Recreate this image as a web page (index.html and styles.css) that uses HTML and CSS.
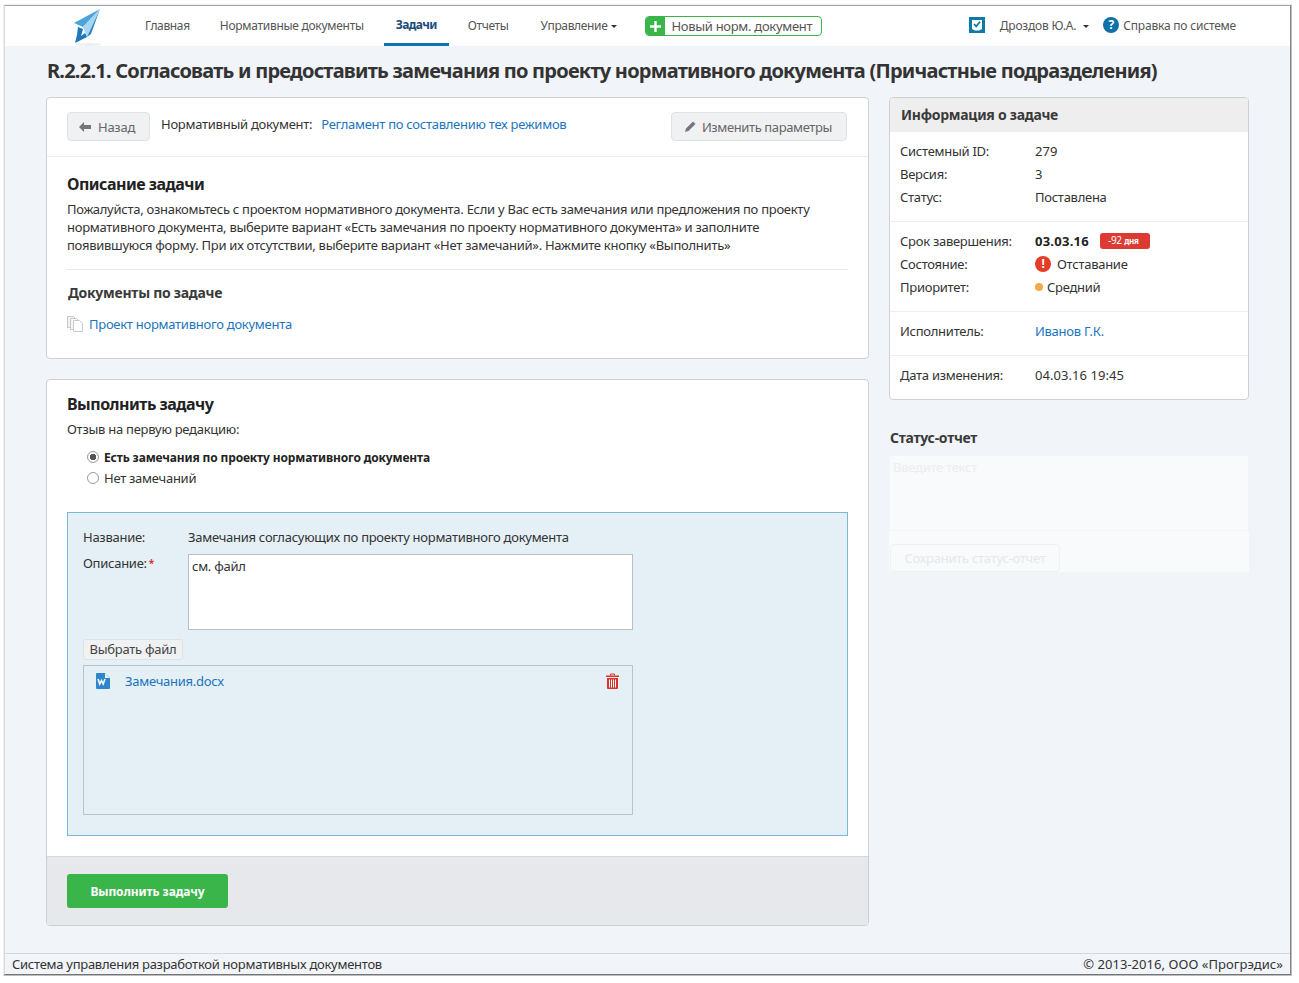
FILE: index.html
```html
<!DOCTYPE html>
<html lang="ru">
<head>
    <meta charset="UTF-8">
    <title>R.2.2.1. Согласовать и предоставить замечания</title>
    <link rel="stylesheet" href="styles.css">
</head>
<body>
<div class="shade-outer">
<div class="shade-inner">
<div class="window">
    <div class="topbar">
        <svg class="logo" width="34" height="39" viewBox="0 0 34 39">
            <ellipse cx="17" cy="37.500" rx="13" ry="1.500" fill="#eceff2"/>
            <polygon points="28,2 2,16 11,20" fill="#4aa5dc"/>
            <polygon points="28,2 11,20 15,30" fill="#a6d5f1"/>
            <polygon points="28,2 15,30 19,27" fill="#2a86c4"/>
            <polygon points="6,20 11,22 9,29 13,26 15,30 3,36 5,28" fill="#1c78b8"/>
        </svg>
        <a class="nav-item first">Главная</a>
        <a class="nav-item wide">Нормативные документы</a>
        <a class="nav-item active">Задачи</a>
        <a class="nav-item">Отчеты</a>
        <a class="nav-item">Управление<span class="caret"></span></a>
        <a class="new-doc">
            <span class="new-plus"><svg width="11" height="11" viewBox="0 0 11 11"><path d="M4.300 0h2.400v4.300H11v2.400H6.700V11H4.300V6.700H0V4.300h4.300z" fill="#fff"/></svg></span>
            <span class="new-text">Новый норм. документ</span>
        </a>
        <div class="top-right">
            <svg class="tasks-ico" width="16" height="16" viewBox="0 0 16 16">
                <path d="M0 0h16v16H0z" fill="#0e7aa8"/>
                <path d="M3 3h10v9l-3 1.500H6L3 12z" fill="#fff"/>
                <path d="M5 7l2.200 2.400L11 4.800" fill="none" stroke="#0e7aa8" stroke-width="1.800"/>
            </svg>
            <a class="user">Дроздов Ю.А.<span class="caret"></span></a>
            <span class="help-ico">?</span>
            <a class="help">Справка по системе</a>
        </div>
    </div>

    <div class="main">
        <h1 class="page-title">R.2.2.1. Согласовать и предоставить замечания по проекту нормативного документа (Причастные подразделения)</h1>
        <div class="columns">
            <div class="col-left">
                <div class="card">
                    <div class="card-head">
                        <a class="btn back"><span class="arrow"></span>Назад</a>
                        <span class="doc-label">Нормативный документ:</span>
                        <a class="link doc-link">Регламент по составлению тех режимов</a>
                        <a class="btn edit">
                            <svg width="11" height="11" viewBox="0 0 11 11"><path d="M0 11l1-3.500L8 .5 10.500 3l-7 7z" fill="#777"/></svg>
                            Изменить параметры
                        </a>
                    </div>
                    <div class="card-body">
                        <h3 class="h-big">Описание задачи</h3>
                        <p class="desc">Пожалуйста, ознакомьтесь с проектом нормативного документа. Если у Вас есть замечания или предложения по проекту<br>нормативного документа, выберите вариант «Есть замечания по проекту нормативного документа» и заполните<br>появившуюся форму. При их отсутствии, выберите вариант «Нет замечаний». Нажмите кнопку «Выполнить»</p>
                        <div class="sep"></div>
                        <h4 class="h-small">Документы по задаче</h4>
                        <div class="doc-row">
                            <svg width="16" height="16" viewBox="0 0 16 16">
                                <path d="M.5.500h6l2 2v9h-8z" fill="#f2f2f2" stroke="#c9c9c9"/>
                                <path d="M3.500 2.500h6l2 2v9h-8z" fill="#f6f6f6" stroke="#c9c9c9"/>
                                <path d="M6.500 4.500h6l3 3v8h-9z" fill="#fff" stroke="#c9c9c9"/>
                            </svg>
                            <a class="link">Проект нормативного документа</a>
                        </div>
                    </div>
                </div>

                <div class="card task-card">
                    <div class="task-body">
                        <h3 class="h-big">Выполнить задачу</h3>
                        <p class="review">Отзыв на первую редакцию:</p>
                        <div class="radio-row bold"><span class="radio on"></span>Есть замечания по проекту нормативного документа</div>
                        <div class="radio-row"><span class="radio"></span>Нет замечаний</div>
                        <div class="form-box">
                            <div class="form-row">
                                <span class="form-label">Название:</span>
                                <span>Замечания согласующих по проекту нормативного документа</span>
                            </div>
                            <div class="form-row desc-row">
                                <span class="form-label">Описание:<span class="req">*</span></span>
                                <div class="textarea">см. файл</div>
                            </div>
                            <a class="file-btn">Выбрать файл</a>
                            <div class="file-box">
                                <div class="file-row">
                                    <svg width="14" height="16" viewBox="0 0 14 16">
                                        <path d="M1 0h8l5 5v10a1 1 0 0 1-1 1H1a1 1 0 0 1-1-1V1a1 1 0 0 1 1-1z" fill="#2f86cc"/>
                                        <path d="M9 0l5 5H9z" fill="#e3f0fa"/>
                                        <path d="M2 6l1.800 5 1.700-3.500L7.200 11 9 6" fill="none" stroke="#fff" stroke-width="1.600"/>
                                    </svg>
                                    <a class="link file-name">Замечания.docx</a>
                                    <svg class="trash" width="13" height="16" viewBox="0 0 13 16">
                                        <path d="M0 2.500h13v1.500H0z" fill="#d9332b"/>
                                        <path d="M4.500 2.500V1h4v1.500" fill="none" stroke="#d9332b"/>
                                        <path d="M1 5h11v10a1 1 0 0 1-1 1H2a1 1 0 0 1-1-1z" fill="#d9332b"/>
                                        <path d="M3.500 6.500v8M5.500 6.500v8M7.500 6.500v8M9.500 6.500v8" stroke="#fff"/>
                                    </svg>
                                </div>
                            </div>
                        </div>
                    </div>
                    <div class="task-foot">
                        <a class="btn-go">Выполнить задачу</a>
                    </div>
                </div>
            </div>

            <div class="col-right">
                <div class="card info">
                    <div class="info-head">Информация о задаче</div>
                    <div class="info-sec">
                        <div class="info-row"><span class="info-key">Системный ID:</span><span class="num">279</span></div>
                        <div class="info-row"><span class="info-key">Версия:</span><span class="num">3</span></div>
                        <div class="info-row"><span class="info-key">Статус:</span><span>Поставлена</span></div>
                    </div>
                    <div class="info-sec">
                        <div class="info-row"><span class="info-key">Срок завершения:</span><b class="due">03.03.16</b><span class="badge">-92 <small>дня</small></span></div>
                        <div class="info-row"><span class="info-key">Состояние:</span><span class="warn">!</span><span>Отставание</span></div>
                        <div class="info-row"><span class="info-key">Приоритет:</span><span class="dot"></span><span>Средний</span></div>
                    </div>
                    <div class="info-sec">
                        <div class="info-row"><span class="info-key">Исполнитель:</span><a class="link">Иванов Г.К.</a></div>
                    </div>
                    <div class="info-sec">
                        <div class="info-row"><span class="info-key">Дата изменения:</span><span class="num">04.03.16 19:45</span></div>
                    </div>
                </div>

                <h4 class="h-small status-title">Статус-отчет</h4>
                <div class="status-input">Введите текст</div>
                <div class="status-foot"><a class="status-btn">Сохранить статус-отчет</a></div>
            </div>
        </div>
    </div>

    <div class="footer">
        <span>Система управления разработкой нормативных документов</span>
        <span class="copy">© 2013-2016, ООО «Прогрэдис»</span>
    </div>
</div>
</div>
</div>
</body>
</html>
```

FILE: styles.css
```css
body{
    margin: 4px 7px 0 3px;
    background-color: #fff;
    font-family: "Noto Sans", "Open Sans", sans-serif;
    font-size: 13px;
    letter-spacing: -0.27px;
    color: #333;
}
a{
    text-decoration: none;
}
h1, h3, h4, p{
    margin: 0;
}
/* window shadow round the screenshot */
.shade-outer{
    border-style: solid;
    border-width: 1px;
    border-color: #efefef #bdbdbd #bdbdbd #eeeeee;
}
.shade-inner{
    border-style: solid;
    border-width: 1px;
    border-color: #a6a6a6 #868686 #747474 #dadada;
}
.window{
    display: flex;
    flex-direction: column;
    height: 968px;
    background-color: #f1f4f9;
}
.topbar{
    display: flex;
    align-items: stretch;
    height: 40px;
    flex-shrink: 0;
    background-color: #fff;
    padding-left: 67px;
    color: #555;
    font-size: 12px;
}
.logo{
    margin-top: 1px;
    margin-right: 27px;
}
.nav-item{
    padding: 0 12px;
    margin-right: 8px;
    line-height: 40px;
    color: #555;
    letter-spacing: -0.35px;
}
.nav-item.first{
    margin-right: 6px;
}
.nav-item.wide{
    letter-spacing: -0.28px;
}
.nav-item.active{
    color: #1d4a7c;
    font-weight: bold;
    letter-spacing: -0.65px;
    border-bottom: 3px solid #0e72b8;
    line-height: 38px;
    height: 37px;
    margin-right: 7px;
}
.caret{
    display: inline-block;
    margin-left: 4px;
    vertical-align: middle;
    border-top: 3px solid #333;
    border-left: 3px solid transparent;
    border-right: 3px solid transparent;
}
.new-doc{
    display: flex;
    align-items: stretch;
    align-self: flex-start;
    margin-top: 10px;
    margin-left: 8px;
    height: 20px;
    border: 1px solid #3ab54a;
    border-radius: 4px;
    overflow: hidden;
    box-sizing: border-box;
    font-size: 13px;
}
.new-plus{
    display: flex;
    align-items: center;
    justify-content: center;
    width: 19px;
    background-color: #3ab54a;
}
.new-text{
    padding: 0 9px 0 6px;
    line-height: 18px;
    color: #555;
    letter-spacing: -0.3px;
}
.top-right{
    display: flex;
    align-items: center;
    margin-left: auto;
    padding-right: 54px;
    padding-bottom: 2px;
    letter-spacing: -0.2px;
}
.user{
    margin-left: 15px;
    color: #555;
}
.user .caret{
    margin-left: 7px;
}
.help-ico{
    width: 16px;
    height: 16px;
    margin-left: 14px;
    border-radius: 50%;
    background-color: #0e72a8;
    color: #fff;
    font-weight: bold;
    font-size: 12px;
    line-height: 16px;
    text-align: center;
}
.help{
    margin-left: 4px;
    color: #555;
}
.main{
    flex: 1;
    padding: 0 41px;
    min-height: 0;
}
.page-title{
    margin-top: 11px;
    margin-bottom: 12px;
    margin-left: 1px;
    line-height: 28px;
    font-size: 20px;
    font-weight: bold;
    color: #333;
    white-space: nowrap;
    letter-spacing: -0.77px;
}
.columns{
    display: flex;
    gap: 20px;
    align-items: flex-start;
}
.col-left{
    width: 823px;
}
.col-right{
    width: 360px;
}
.card{
    background-color: #fff;
    border: 1px solid #ccd0d6;
    border-radius: 4px;
    overflow: hidden;
}
.card-head{
    display: flex;
    align-items: flex-start;
    height: 59px;
    box-sizing: border-box;
    padding: 14px 21px 0 20px;
    border-bottom: 1px solid #eceef1;
    color: #333;
}
.btn{
    display: flex;
    align-items: center;
    height: 29px;
    box-sizing: border-box;
    border: 1px solid #dfe1e4;
    border-radius: 4px;
    background-color: #f0f1f3;
    color: #666;
}
.back{
    padding: 0 14px 0 13px;
}
.arrow{
    width: 7px;
    height: 4px;
    margin-left: 3px;
    margin-right: 7px;
    background-color: #777;
    position: relative;
}
.arrow:before{
    content: "";
    position: absolute;
    left: -5px;
    top: -3px;
    border-right: 5px solid #777;
    border-top: 5px solid transparent;
    border-bottom: 5px solid transparent;
}
.doc-label{
    margin-left: 11px;
    line-height: 24px;
}
.doc-link{
    margin-left: 9px;
    line-height: 24px;
}
.edit{
    margin-left: auto;
    padding: 0 14px 0 13px;
    gap: 6px;
    letter-spacing: -0.38px;
}
.link{
    color: #1b75bc;
}
.card-body{
    padding: 16px 20px 0;
    height: 201px;
    box-sizing: border-box;
}
.h-big{
    font-size: 16px;
    line-height: 22px;
    color: #222;
    font-weight: bold;
    letter-spacing: -0.5px;
}
.desc{
    margin-top: 5px;
    line-height: 18px;
    color: #333;
}
.sep{
    height: 1px;
    margin-top: 15px;
    background-color: #e8e9ec;
}
.h-small{
    margin-top: 13px;
    margin-left: 1px;
    font-size: 14px;
    line-height: 20px;
    color: #3a3a3a;
    font-weight: bold;
}
.doc-row{
    display: flex;
    align-items: center;
    gap: 6px;
    margin-top: 12px;
}
.task-card{
    margin-top: 20px;
}
.task-body{
    padding: 13px 20px 20px;
    border-bottom: 1px solid #d5d8dc;
}
.review{
    margin-top: 5px;
    line-height: 18px;
}
.radio-row{
    display: flex;
    align-items: center;
    height: 21px;
    padding-left: 20px;
    color: #333;
}
.radio-row.bold{
    height: 20px;
    margin-top: 9px;
    font-weight: bold;
    color: #222;
    font-size: 12px;
    letter-spacing: -0.14px;
}
.radio{
    width: 12px;
    height: 12px;
    margin-right: 5px;
    box-sizing: border-box;
    border: 1px solid #999;
    border-radius: 50%;
    background-color: #fff;
}
.radio.on{
    background: radial-gradient(circle, #555 0 3px, #fff 3.500px);
}
.form-box{
    margin-top: 24px;
    height: 324px;
    box-sizing: border-box;
    padding: 15px 15px 0;
    border: 1px solid #7ab8d6;
    background-color: #e4eff6;
}
.form-row{
    display: flex;
    line-height: 18px;
}
.form-label{
    width: 105px;
    flex-shrink: 0;
}
.req{
    margin-left: 2px;
    color: #d9332b;
    font-size: 10px;
    font-weight: bold;
    vertical-align: top;
}
.desc-row{
    margin-top: 8px;
}
.textarea{
    width: 445px;
    height: 76px;
    box-sizing: border-box;
    padding: 2px 3px;
    border: 1px solid #b5c0c8;
    background-color: #fff;
}
.file-btn{
    display: block;
    width: 100px;
    height: 21px;
    margin-top: 9px;
    box-sizing: border-box;
    border: 1px solid #dfe2e5;
    border-radius: 3px;
    background-color: #eff1f3;
    color: #444;
    text-align: center;
    line-height: 19px;
}
.file-box{
    width: 550px;
    height: 150px;
    margin-top: 5px;
    box-sizing: border-box;
    border: 1px solid #b5c5cf;
}
.file-row{
    display: flex;
    align-items: center;
    height: 30px;
    padding: 0 13px 0 12px;
}
.file-name{
    margin-left: 15px;
}
.trash{
    margin-left: auto;
}
.task-foot{
    height: 68px;
    box-sizing: border-box;
    padding: 17px 20px;
    background-color: #e6e8ec;
}
.btn-go{
    display: block;
    width: 161px;
    height: 34px;
    border-radius: 3px;
    background-color: #3ab54a;
    color: #fff;
    font-weight: bold;
    font-size: 12px;
    letter-spacing: -0.1px;
    text-align: center;
    line-height: 36px;
}
.info-head{
    height: 34px;
    padding-left: 11px;
    background-color: #eeeeee;
    font-size: 14px;
    font-weight: bold;
    color: #3a3a3a;
    line-height: 34px;
}
.info-sec{
    padding: 7px 10px 13px 10px;
    border-top: 1px solid #eceef1;
}
.info-sec:nth-child(2){
    border-top: none;
}
.info-row{
    display: flex;
    align-items: center;
    height: 23px;
}
.info-key{
    width: 135px;
    flex-shrink: 0;
}
.num{
    letter-spacing: 0.05px;
}
.due{
    color: #222;
    letter-spacing: 0.25px;
}
.badge{
    margin-left: 11px;
    padding: 0 11px 0 8px;
    height: 16px;
    border-radius: 3px;
    background-color: #dc3a32;
    color: #fff;
    font-size: 10px;
    line-height: 15px;
}
.badge small{
    font-size: 8px;
    font-weight: bold;
}
.warn{
    width: 16px;
    height: 16px;
    margin-right: 6px;
    border-radius: 50%;
    background-color: #e33d26;
    color: #fff;
    font-weight: bold;
    font-size: 12px;
    text-align: center;
    line-height: 16px;
}
.dot{
    width: 8px;
    height: 8px;
    margin-right: 4px;
    border-radius: 50%;
    background-color: #f2a84b;
}
.status-title{
    margin-top: 28px;
    margin-left: 1px;
}
.status-input{
    height: 74px;
    margin: 8px 1px 0;
    padding: 2px 3px;
    box-sizing: border-box;
    background-color: #f9fafc;
    color: #eceef1;
}
.status-foot{
    height: 41px;
    margin-top: 1px;
    padding-top: 13px;
    box-sizing: border-box;
    background-color: #f9fafc;
}
.status-btn{
    display: block;
    width: 170px;
    height: 28px;
    margin-left: 1px;
    box-sizing: border-box;
    border: 1px solid #f0f1f3;
    border-radius: 4px;
    color: #e6e8ea;
    text-align: center;
    line-height: 26px;
}
.footer{
    display: flex;
    justify-content: space-between;
    height: 21px;
    flex-shrink: 0;
    box-sizing: border-box;
    padding: 0 7px;
    border-top: 1px solid #d5d8dc;
    line-height: 21px;
    color: #333;
}
.copy{
    letter-spacing: 0.05px;
}
```
